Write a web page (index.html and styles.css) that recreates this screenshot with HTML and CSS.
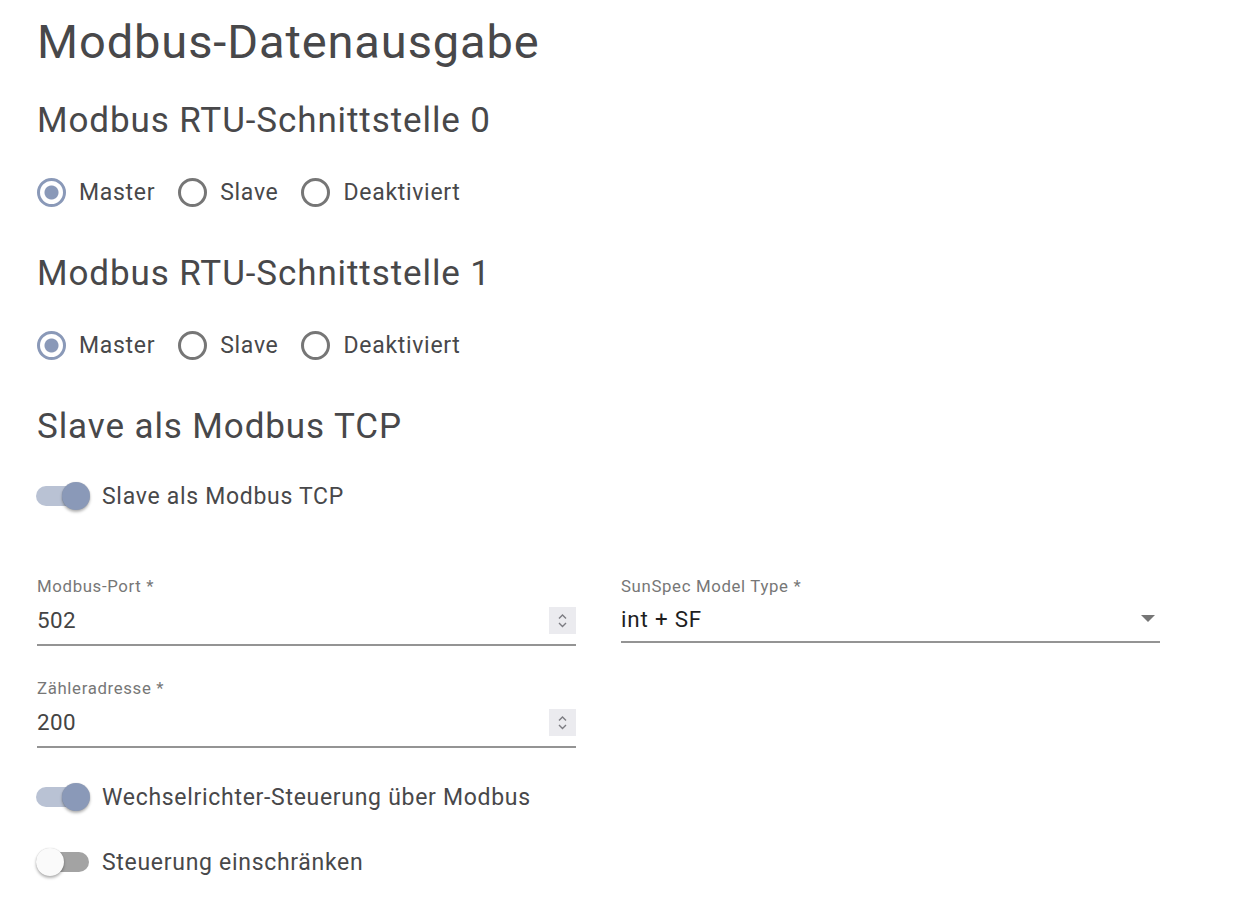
FILE: index.html
```html
<!DOCTYPE html>
<html lang="de">
<head>
    <meta charset="UTF-8">
    <meta name="viewport" content="width=device-width, initial-scale=1.0">
    <title>Modbus-Datenausgabe</title>
    <link rel="stylesheet" href="styles.css">
</head>
<body>
    <main class="page">
        <h1>Modbus-Datenausgabe</h1>

        <section>
            <h2>Modbus RTU-Schnittstelle 0</h2>
            <div class="radio-group">
                <label class="radio"><input type="radio" name="rtu0" checked> Master</label>
                <label class="radio"><input type="radio" name="rtu0"> Slave</label>
                <label class="radio"><input type="radio" name="rtu0"> Deaktiviert</label>
            </div>
        </section>

        <section>
            <h2>Modbus RTU-Schnittstelle 1</h2>
            <div class="radio-group">
                <label class="radio"><input type="radio" name="rtu1" checked> Master</label>
                <label class="radio"><input type="radio" name="rtu1"> Slave</label>
                <label class="radio"><input type="radio" name="rtu1"> Deaktiviert</label>
            </div>
        </section>

        <section>
            <h2 class="tight">Slave als Modbus TCP</h2>
            <label class="switch"><input type="checkbox" checked> Slave als Modbus TCP</label>

            <div class="fields">
                <div class="field">
                    <div class="field-label">Modbus-Port *</div>
                    <div class="field-row">
                        <input class="field-input" type="text" value="502">
                        <span class="spinner">
                            <svg width="27" height="27" viewBox="0 0 27 27"><polyline points="10,11.5 13.5,8 17,11.5"/><polyline points="10,16 13.5,19.5 17,16"/></svg>
                        </span>
                    </div>
                </div>
                <div class="field select">
                    <div class="field-label">SunSpec Model Type *</div>
                    <div class="field-row">
                        <span class="select-value">int + SF</span>
                        <svg class="caret" width="14" height="7" viewBox="0 0 14 7"><polygon points="0,0 14,0 7,7"/></svg>
                    </div>
                </div>
                <div class="field">
                    <div class="field-label">Zähleradresse *</div>
                    <div class="field-row">
                        <input class="field-input" type="text" value="200">
                        <span class="spinner">
                            <svg width="27" height="27" viewBox="0 0 27 27"><polyline points="10,11.5 13.5,8 17,11.5"/><polyline points="10,16 13.5,19.5 17,16"/></svg>
                        </span>
                    </div>
                </div>
            </div>

            <label class="switch after-fields"><input type="checkbox" checked> Wechselrichter-Steuerung über Modbus</label>
            <label class="switch next"><input type="checkbox"> Steuerung einschränken</label>
        </section>
    </main>
</body>
</html>
```

FILE: styles.css
```css
body {
    margin: 0;
    font-family: Roboto, "Noto Sans", sans-serif;
    color: #48484a;
    background: #fff;
}
.page {
    padding: 14px 0 0 37px;
}
h1 {
    font-size: 47px;
    line-height: 56px;
    font-weight: 400;
    letter-spacing: 0.9px;
    margin: 0 0 31px;
}
h2 {
    font-size: 35px;
    line-height: 40px;
    font-weight: 400;
    letter-spacing: 0.9px;
    margin: 0 0 31px;
}
h2.tight {
    margin-bottom: 29px;
}
.radio-group {
    display: flex;
    align-items: center;
    gap: 23px;
    height: 40px;
    margin-bottom: 42px;
}
.radio {
    display: flex;
    align-items: center;
    gap: 13px;
    font-size: 23px;
    letter-spacing: 0.7px;
}
.radio input {
    appearance: none;
    box-sizing: border-box;
    width: 29px;
    height: 29px;
    margin: 0;
    border: 3px solid #767676;
    border-radius: 50%;
}
.radio input:checked {
    border-color: #8a99b8;
    background: radial-gradient(circle, #8a99b8 6.5px, transparent 7.5px);
}

/* switches */
.switch {
    display: flex;
    align-items: center;
    gap: 11px;
    height: 40px;
    font-size: 23px;
    letter-spacing: 0.7px;
}
.switch input {
    appearance: none;
    position: relative;
    width: 55px;
    height: 30px;
    margin: 0 0 0 -1px;
}
.switch input::before {
    content: "";
    position: absolute;
    left: 0;
    top: 5px;
    width: 53px;
    height: 20px;
    border-radius: 10px;
    background: #a3a3a3;
}
.switch input::after {
    content: "";
    position: absolute;
    left: 0;
    top: 1px;
    width: 28px;
    height: 28px;
    border-radius: 50%;
    background: #fafafa;
    box-shadow: 0 2px 3px rgba(0, 0, 0, 0.3), 0 0 1px rgba(0, 0, 0, 0.2);
}
.switch input:checked::before {
    background: #b9c2d4;
}
.switch input:checked::after {
    left: 26px;
    background: #8a99b8;
}
.switch.after-fields {
    margin-top: 29px;
}
.switch.next {
    margin-top: 25px;
}

/* text fields */
.fields {
    display: grid;
    grid-template-columns: 539px 539px;
    column-gap: 45px;
    row-gap: 32px;
    margin-top: 60px;
}
.field-label {
    font-size: 16.8px;
    line-height: 20px;
    letter-spacing: 0.65px;
    color: #777;
}
.field-row {
    display: flex;
    align-items: center;
    height: 48px;
    border-bottom: 2px solid #949494;
}
.select .field-row {
    height: 45px;
}
.field-input {
    flex: 1;
    min-width: 0;
    border: none;
    outline: none;
    padding: 0;
    font: inherit;
    font-size: 22.4px;
    letter-spacing: 0.4px;
    color: #444;
    background: transparent;
}
.spinner {
    display: flex;
    width: 27px;
    height: 27px;
    background: #ebebef;
}
.spinner polyline {
    fill: none;
    stroke: #7c7c82;
    stroke-width: 1.4;
}
.select-value {
    flex: 1;
    font-size: 22.4px;
    letter-spacing: 0.8px;
    color: #1e1e1e;
}
.caret {
    margin-right: 5px;
    fill: #767676;
}
```
